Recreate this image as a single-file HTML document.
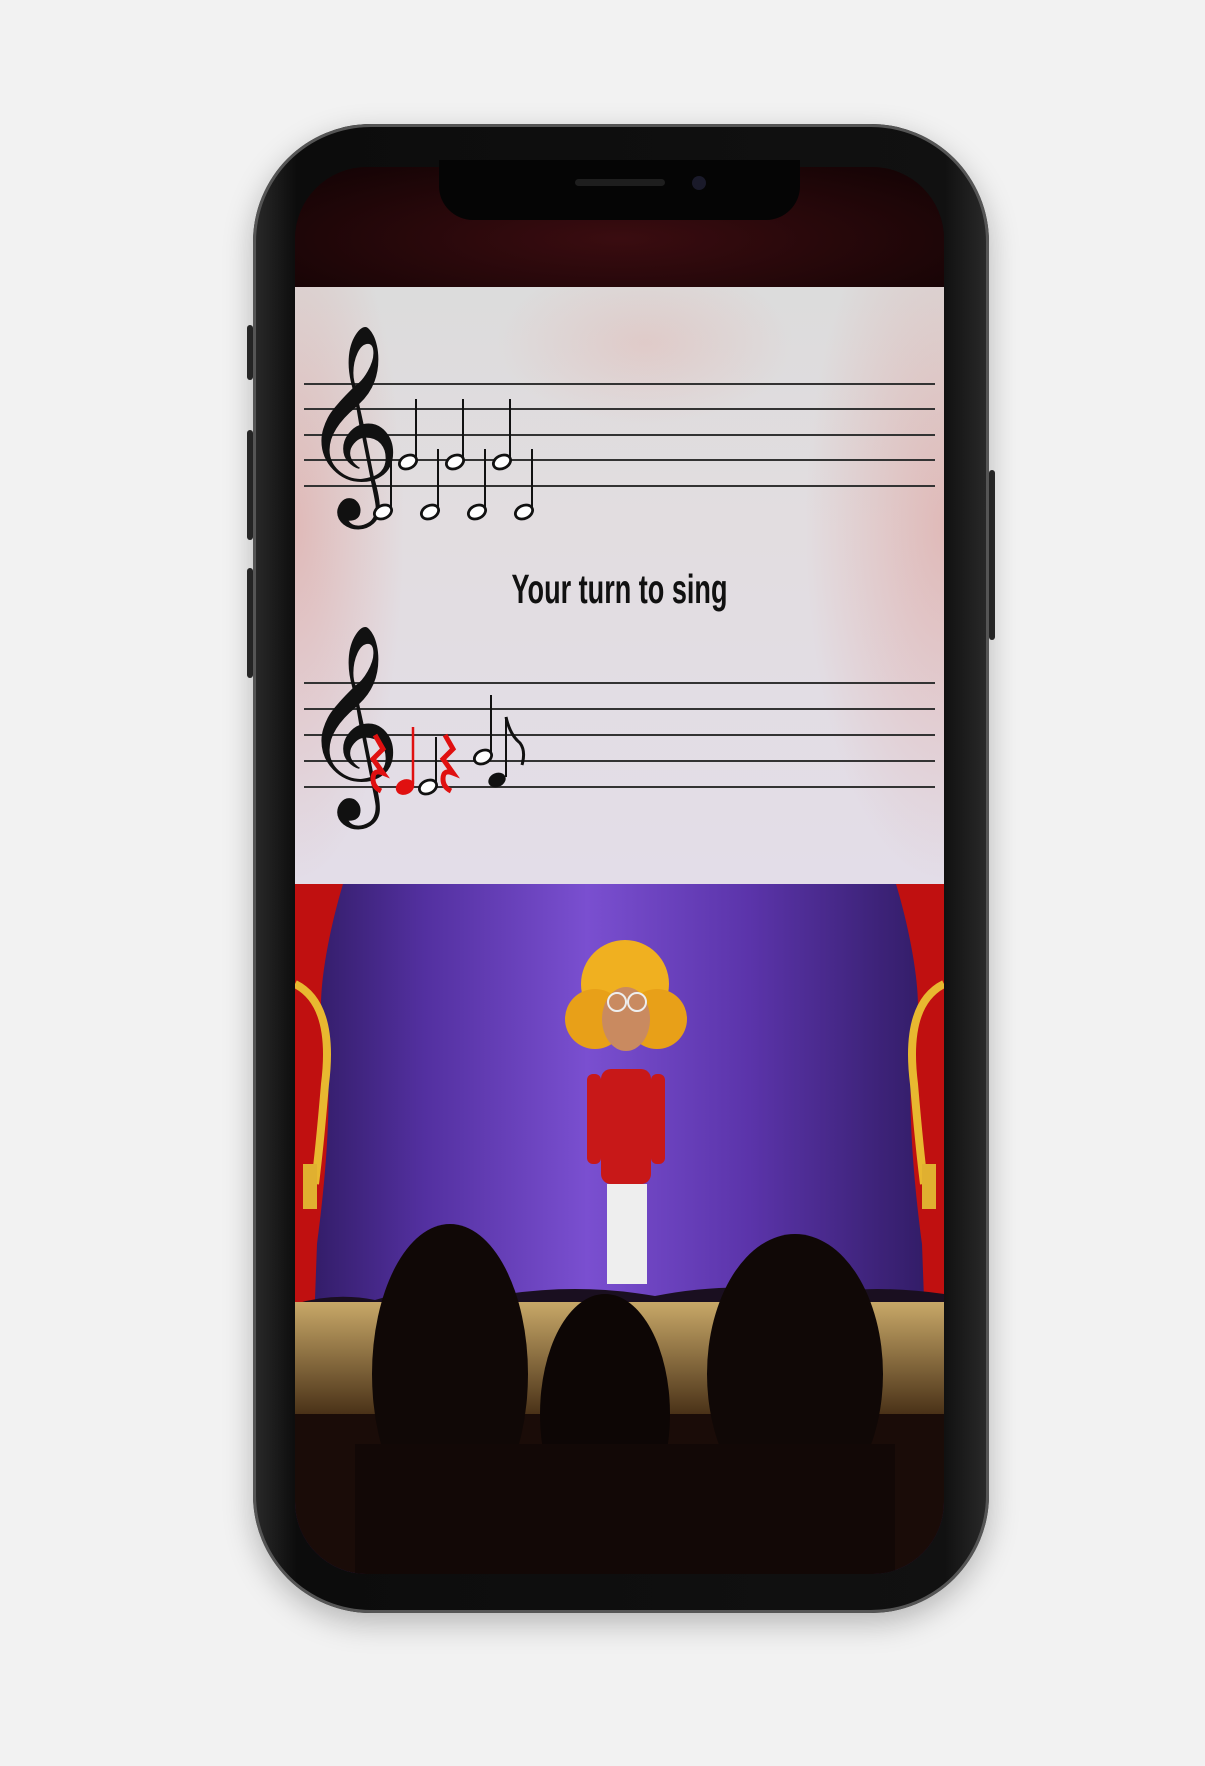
<!DOCTYPE html>
<html><head><meta charset="utf-8"><style>
html,body{margin:0;padding:0;width:1205px;height:1766px;background:#f2f2f2;overflow:hidden;font-family:"Liberation Sans","DejaVu Sans",sans-serif}
.phone{position:absolute;left:253px;top:124px;width:736px;height:1489px;border-radius:118px;background:linear-gradient(90deg,#2a2a2a,#0c0c0c 6%,#111 94%,#2a2a2a);box-shadow:0 10px 30px rgba(0,0,0,.25),inset 0 0 0 3px #555}
.btn{position:absolute;background:#2a2a2a;border-radius:3px}
.screen{position:absolute;left:295px;top:167px;width:649px;height:1407px;border-radius:72px;overflow:hidden;background:#1a0608}
.notch{position:absolute;left:439px;top:160px;width:361px;height:60px;background:#050505;border-radius:0 0 34px 34px}
.panel{position:absolute;left:0;top:120px;width:649px;height:597px;background:linear-gradient(180deg,#dcdcdc 0%,#e2dde0 40%,#e3dde8 100%)}
.line{position:absolute;left:9px;right:9px;height:2px;background:#333}
.clef{position:absolute;font-family:"DejaVu Sans",serif;font-size:170px;color:#111;line-height:1}
.title{position:absolute;left:0;width:649px;top:279px;text-align:center;font-size:41px;font-weight:bold;color:#111;transform:scaleX(.66)}
.stage{position:absolute;left:0;top:717px;width:649px;height:690px;background:linear-gradient(90deg,#2e1a60 0%,#5330a0 20%,#7a4fd0 45%,#5b34aa 70%,#2e1a60 100%)}
</style></head><body>
<div class="btn" style="left:247px;top:325px;width:6px;height:55px"></div>
<div class="btn" style="left:247px;top:430px;width:6px;height:110px"></div>
<div class="btn" style="left:247px;top:568px;width:6px;height:110px"></div>
<div class="btn" style="left:989px;top:470px;width:6px;height:170px"></div>
<div class="phone"></div>
<div class="screen">
  <div style="position:absolute;left:0;top:0;width:649px;height:120px;background:radial-gradient(ellipse at 50% 60%,#3a0c10,#120304)"></div>
  <div class="panel">
    <div style="position:absolute;left:0;top:0;width:110px;height:597px;background:radial-gradient(ellipse at 0% 40%,rgba(220,120,110,.35),rgba(0,0,0,0) 70%)"></div>
    <div style="position:absolute;right:0;top:0;width:140px;height:597px;background:radial-gradient(ellipse at 100% 40%,rgba(220,120,110,.35),rgba(0,0,0,0) 70%)"></div>
    <div style="position:absolute;left:200px;top:0;width:300px;height:140px;background:radial-gradient(ellipse at 50% 40%,rgba(230,150,140,.25),rgba(0,0,0,0) 70%)"></div>
    <div class="line" style="top:96px"></div><div class="line" style="top:121px"></div><div class="line" style="top:147px"></div><div class="line" style="top:172px"></div><div class="line" style="top:198px"></div>
    <div class="clef" style="left:6px;top:50px">𝄞</div>
    <div class="title">Your turn to sing</div>
    <div class="line" style="top:395px"></div><div class="line" style="top:421px"></div><div class="line" style="top:447px"></div><div class="line" style="top:473px"></div><div class="line" style="top:499px"></div>
    <div class="clef" style="left:6px;top:350px">𝄞</div>
    <svg width="649" height="597" style="position:absolute;left:0;top:0">
      <g fill="#fff" stroke="#111" stroke-width="2.8">
        <ellipse cx="88" cy="225" rx="9" ry="6.5" transform="rotate(-25 88 225)"/>
        <ellipse cx="135" cy="225" rx="9" ry="6.5" transform="rotate(-25 135 225)"/>
        <ellipse cx="182" cy="225" rx="9" ry="6.5" transform="rotate(-25 182 225)"/>
        <ellipse cx="229" cy="225" rx="9" ry="6.5" transform="rotate(-25 229 225)"/>
        <ellipse cx="113" cy="175" rx="9" ry="6.5" transform="rotate(-25 113 175)"/>
        <ellipse cx="160" cy="175" rx="9" ry="6.5" transform="rotate(-25 160 175)"/>
        <ellipse cx="207" cy="175" rx="9" ry="6.5" transform="rotate(-25 207 175)"/>
        <ellipse cx="188" cy="470" rx="9" ry="6.5" transform="rotate(-25 188 470)"/>
        <ellipse cx="133" cy="500" rx="9" ry="6.5" transform="rotate(-25 133 500)"/>
      </g>
      <g stroke="#111" stroke-width="2">
        <line x1="96" y1="222" x2="96" y2="162"/><line x1="143" y1="222" x2="143" y2="162"/>
        <line x1="190" y1="222" x2="190" y2="162"/><line x1="237" y1="222" x2="237" y2="162"/>
        <line x1="121" y1="172" x2="121" y2="112"/><line x1="168" y1="172" x2="168" y2="112"/>
        <line x1="215" y1="172" x2="215" y2="112"/>
        <line x1="196" y1="467" x2="196" y2="408"/>
        <line x1="141" y1="497" x2="141" y2="450"/>
        <line x1="211" y1="490" x2="211" y2="430"/>
      </g>
      <ellipse cx="202" cy="493" rx="9" ry="7" fill="#111" transform="rotate(-25 202 493)"/>
      <path d="M211 430 q4 18 14 26 q6 8 2 22" stroke="#111" stroke-width="3" fill="none"/>
      <g fill="#e01010" stroke="#e01010">
        <path d="M80 448 l8 14 l-10 10 l10 14 q-10 -4 -10 6 q0 8 8 12" stroke-width="5" fill="none"/>
        <ellipse cx="110" cy="500" rx="9" ry="7" transform="rotate(-25 110 500)"/>
        <line x1="118" y1="497" x2="118" y2="440" stroke-width="2.5"/>
        <path d="M150 448 l8 14 l-10 10 l10 14 q-10 -4 -10 6 q0 8 8 12" stroke-width="5" fill="none"/>
      </g>
    </svg>
  </div>
  <div class="stage">
    <svg width="649" height="690" style="position:absolute;left:0;top:0">
      <defs><linearGradient id="fl" x1="0" y1="0" x2="0" y2="1"><stop offset="0" stop-color="#c8a868"/><stop offset="1" stop-color="#4a3218"/></linearGradient></defs>
      <path d="M0 0 H48 C30 60 22 120 28 140 C40 200 30 300 22 360 L18 470 H0 Z" fill="#c01010"/>
      <path d="M649 0 H601 C619 60 627 120 621 140 C609 200 619 300 627 360 L631 470 H649 Z" fill="#c01010"/>
      <path d="M0 100 q40 20 30 100 q-5 60 -10 100" stroke="#e8b830" stroke-width="8" fill="none"/>
      <path d="M649 100 q-40 20 -30 100 q5 60 10 100" stroke="#e8b830" stroke-width="8" fill="none"/>
      <rect x="8" y="280" width="14" height="45" fill="#e0b030"/><rect x="627" y="280" width="14" height="45" fill="#e0b030"/>
      <path d="M0 420 q40 -12 80 -4 q60 -18 120 -4 q80 -14 160 0 q80 -16 160 -2 q60 -10 129 0 V430 H0Z" fill="#1a0f20"/>
      <rect x="0" y="418" width="649" height="112" fill="url(#fl)"/>
      <rect x="0" y="530" width="649" height="160" fill="#1a0c08"/>
      <circle cx="330" cy="100" r="44" fill="#f0b020"/><circle cx="300" cy="135" r="30" fill="#e8a018"/><circle cx="362" cy="135" r="30" fill="#e8a018"/>
      <ellipse cx="331" cy="135" rx="24" ry="32" fill="#c98a60"/>
      <circle cx="322" cy="118" r="9" fill="none" stroke="#eee" stroke-width="2"/><circle cx="342" cy="118" r="9" fill="none" stroke="#eee" stroke-width="2"/>
      <rect x="306" y="185" width="50" height="115" rx="10" fill="#c81818"/>
      <rect x="292" y="190" width="14" height="90" rx="6" fill="#c81818"/><rect x="356" y="190" width="14" height="90" rx="6" fill="#c81818"/>
      <rect x="312" y="300" width="40" height="100" fill="#eee"/>
      <ellipse cx="155" cy="490" rx="78" ry="150" fill="#100806"/>
      <ellipse cx="310" cy="530" rx="65" ry="120" fill="#0d0605"/>
      <ellipse cx="500" cy="490" rx="88" ry="140" fill="#100806"/>
      <rect x="60" y="560" width="540" height="130" fill="#120806"/>
    </svg>
  </div>
</div>
<div class="notch"></div>
<div style="position:absolute;left:575px;top:179px;width:90px;height:7px;border-radius:4px;background:#1e1e1e"></div>
<div style="position:absolute;left:692px;top:176px;width:14px;height:14px;border-radius:50%;background:#1a1a2a"></div>
</body></html>
